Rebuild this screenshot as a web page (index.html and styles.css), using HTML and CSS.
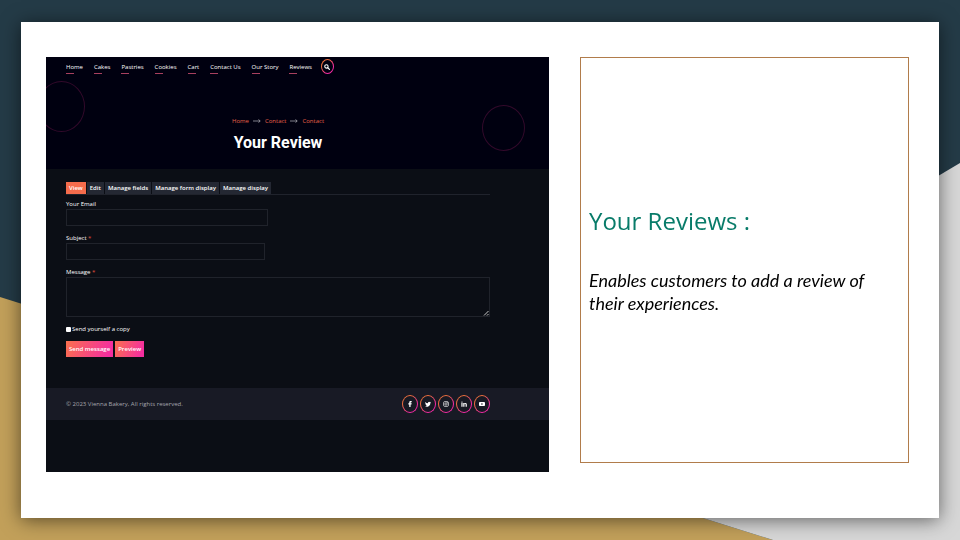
FILE: index.html
```html
<!DOCTYPE html>
<html lang="en">
<head>
<meta charset="utf-8">
<title>Your Reviews</title>
<link rel="stylesheet" href="styles.css">
</head>
<body>
<svg class="backdrop" viewBox="0 0 960 540" preserveAspectRatio="none" aria-hidden="true">
  <rect width="960" height="540" fill="#243b47"/>
  <path d="M0 297L773 540H0Z" fill="#c2a05a"/>
  <path d="M960 163V540H773L480 448Z" fill="#d7d7d7"/>
</svg>
<main class="slide">
  <section class="site">
    <header class="hero">
      <span class="ring ring-left"></span>
      <span class="ring ring-right"></span>
      <nav class="menu">
        <a href="#">Home</a>
        <a href="#">Cakes</a>
        <a href="#">Pastries</a>
        <a href="#">Cookies</a>
        <a href="#">Cart</a>
        <a href="#">Contact Us</a>
        <a href="#">Our Story</a>
        <a href="#">Reviews</a>
        <button class="round search" type="button" aria-label="Search">
          <svg viewBox="0 0 16 16"><circle cx="6.5" cy="6.5" r="4.5" fill="none" stroke="#fff" stroke-width="2.8"/><path d="M10 10l4.5 4.5" stroke="#fff" stroke-width="3.2" stroke-linecap="round"/></svg>
        </button>
      </nav>
      <div class="crumbs">
        <a href="#">Home</a>
        <svg viewBox="0 0 16 8"><path d="M0 4H14M11 1l3.500 3L11 7" fill="none" stroke="#a9a9b2" stroke-width="1.500"/></svg>
        <a href="#">Contact</a>
        <svg viewBox="0 0 16 8"><path d="M0 4H14M11 1l3.500 3L11 7" fill="none" stroke="#a9a9b2" stroke-width="1.500"/></svg>
        <a href="#">Contact</a>
      </div>
      <h2 class="title">Your Review</h2>
    </header>
    <div class="content">
      <nav class="tabs">
        <a class="tab active" href="#">View</a>
        <a class="tab" href="#">Edit</a>
        <a class="tab" href="#">Manage fields</a>
        <a class="tab" href="#">Manage form display</a>
        <a class="tab" href="#">Manage display</a>
      </nav>
      <form class="form">
        <label for="email">Your Email</label>
        <input class="field email" id="email" type="email">
        <label for="subject">Subject <span class="required">*</span></label>
        <input class="field subject" id="subject" type="text">
        <label for="message">Message <span class="required">*</span></label>
        <div class="message-box">
          <textarea class="field message" id="message"></textarea>
          <svg class="grip" viewBox="0 0 6 6" aria-hidden="true"><path d="M1 5.500L5.500 1M4 5.500L5.500 4" stroke="#c8c8c8" stroke-width="1"/></svg>
        </div>
        <div class="copy">
          <input id="copy" type="checkbox">
          <label for="copy">Send yourself a copy</label>
        </div>
        <div class="actions">
          <button type="button">Send message</button>
          <button type="button">Preview</button>
        </div>
      </form>
    </div>
    <footer class="footer">
      <span>© 2023 Vienna Bakery, All rights reserved.</span>
      <div class="social">
        <a class="round" href="#" aria-label="Facebook"><svg viewBox="0 0 16 16"><path fill="#fff" d="M6 16V9H3.500V6H6V4c0-2.700 1.500-4 4-4h2.500v3H11c-1.200 0-1.500.5-1.500 1.500V6h3L12 9H9.500v7z"/></svg></a>
        <a class="round" href="#" aria-label="Twitter"><svg viewBox="0 0 16 16"><path fill="#fff" d="M16 3.500c-.6.300-1.200.4-1.900.5.700-.4 1.200-1 1.400-1.800-.6.400-1.300.6-2.100.8a3.300 3.300 0 0 0-5.600 3C5 5.900 2.700 4.600 1.100 2.600c-.9 1.500-.4 3.400 1 4.400-.5 0-1-.2-1.500-.4 0 1.600 1.100 2.900 2.600 3.200-.5.100-1 .2-1.500.1.400 1.300 1.600 2.200 3.100 2.300A6.600 6.600 0 0 1 0 13.500 9.300 9.300 0 0 0 14.400 5.200c.6-.5 1.200-1 1.600-1.700z"/></svg></a>
        <a class="round" href="#" aria-label="Instagram"><svg viewBox="0 0 16 16" fill="none" stroke="#fff" stroke-width="1.700"><rect x="1.500" y="1.500" width="13" height="13" rx="3.500"/><circle cx="8" cy="8" r="3.200"/><circle cx="12" cy="4" r=".5"/></svg></a>
        <a class="round" href="#" aria-label="LinkedIn"><svg viewBox="0 0 16 16"><path fill="#fff" d="M1 5.500h3.200V15H1zM2.600 1a1.800 1.800 0 1 1 0 3.600 1.800 1.800 0 0 1 0-3.600zM6 5.500h3v1.300c.5-.9 1.600-1.600 3-1.600 3 0 3.500 2 3.500 4.500V15h-3.200v-4.700c0-1.100 0-2.400-1.500-2.400s-1.600 1.100-1.600 2.300V15H6z"/></svg></a>
        <a class="round" href="#" aria-label="YouTube"><svg viewBox="0 0 16 16"><path fill="#fff" fill-rule="evenodd" d="M3 2.500h10c2 0 3 1 3 3v5c0 2-1 3-3 3H3c-2 0-3-1-3-3v-5c0-2 1-3 3-3zM6.500 5.500v5L11 8z"/></svg></a>
      </div>
    </footer>
  </section>
  <aside class="caption">
    <h1>Your Reviews :</h1>
    <p>Enables customers to add a review of their experiences.</p>
  </aside>
</main>
</body>
</html>
```
FILE: styles.css
```css
* {
  box-sizing: border-box;
}

body {
  margin: 0;
  min-height: 100vh;
  padding: 22px 21px;
  display: flex;
}

a {
  color: inherit;
  text-decoration: none;
}

.backdrop {
  position: fixed;
  inset: 0;
  width: 100%;
  height: 100%;
  z-index: -1;
}

.slide {
  flex: 1;
  display: grid;
  grid-template-columns: 503fr 329fr;
  gap: 31px;
  padding: 35px 30px 46px 25px;
  background: #fff;
  box-shadow: 0 2px 18px rgba(0, 0, 0, 0.55);
}

.site {
  background: #0b0e15;
  color: #fff;
  font: 6px/8px "Open Sans", sans-serif;
}

.hero {
  position: relative;
  overflow: hidden;
  background: #000010;
  padding: 2px 20px 15px;
}

.menu {
  display: flex;
  align-items: center;
  gap: 11px;
}

.menu a {
  background: linear-gradient(#a8405f, #a8405f) 0 100% / 8px 1px no-repeat;
  padding: 4px 0 3px;
}

.round {
  display: grid;
  place-items: center;
  width: 16px;
  height: 18px;
  padding: 0;
  border: 1px solid transparent;
  border-radius: 50%;
  background: linear-gradient(#171923, #171923) padding-box, linear-gradient(135deg, #f0703f 30%, #f52ba5 70%) border-box;
}

.round svg {
  width: 6px;
  height: 6px;
}

.search {
  width: 13px;
  height: 15px;
  margin-left: -2px;
  background: linear-gradient(#000010, #000010) padding-box, linear-gradient(135deg, #f0703f 30%, #f52ba5 70%) border-box;
}

.ring {
  position: absolute;
  border: 1px solid #32092b;
  border-radius: 50%;
}

.ring-left {
  left: -8px;
  top: 24px;
  width: 47px;
  height: 51px;
}

.ring-right {
  right: 24px;
  top: 48px;
  width: 43px;
  height: 46px;
}

.crumbs {
  display: flex;
  align-items: center;
  justify-content: center;
  gap: 4px;
  margin-top: 43px;
  padding-right: 39px;
  color: #e8604a;
}

.crumbs svg {
  width: 8px;
  height: 4px;
}

.title {
  margin: 7px 0 0;
  padding-right: 39px;
  text-align: center;
  font: bold 16px/22px Roboto, sans-serif;
  color: #fff;
}

.content {
  padding: 13px 59px 31px 20px;
}

.tabs {
  display: flex;
  gap: 1px;
  border-bottom: 1px solid #20232c;
}

.tab {
  padding: 2px 3px;
  background: #242833;
  font-weight: 600;
}

.tab.active {
  background: #f56c4c;
}

.form {
  display: flex;
  flex-direction: column;
  padding-top: 5px;
}

.form label {
  font-weight: 500;
}

.required {
  color: #e8523f;
}

.field {
  margin: 1px 0 8px;
  padding: 2px;
  border: 1px solid #20232b;
  border-radius: 0;
  background: transparent;
  color: inherit;
  font: inherit;
}

.email {
  width: 202px;
  max-width: 100%;
  height: 17px;
}

.subject {
  width: 199px;
  max-width: 100%;
  height: 17px;
}

.message-box {
  position: relative;
  display: grid;
}

.message {
  height: 40px;
  resize: none;
}

.grip {
  position: absolute;
  right: 1px;
  bottom: 9px;
  width: 6px;
  height: 6px;
}

.copy {
  display: flex;
  align-items: center;
  gap: 1px;
}

.copy input {
  appearance: none;
  width: 5px;
  height: 5px;
  margin: 0;
  background: #fff;
  border-radius: 1px;
}

.actions {
  display: flex;
  gap: 2px;
  margin-top: 8px;
}

.actions button {
  padding: 4px 3px;
  border: 0;
  background: linear-gradient(110deg, #fa704e, #f52e9f 90%);
  color: #fff;
  font: 600 6px/8px "Open Sans", sans-serif;
}

.footer {
  display: flex;
  align-items: center;
  justify-content: space-between;
  padding: 7px 59px 7px 20px;
  background: #181a25;
  color: #a5a6ad;
}

.social {
  display: flex;
  gap: 2px;
}

.caption {
  display: flex;
  flex-direction: column;
  justify-content: center;
  margin-bottom: 9px;
  padding: 0 8px;
  border: 1px solid #b17c4b;
}

.caption h1 {
  margin: 0 0 32px;
  color: #087b69;
  font: 24px/32px "Open Sans", sans-serif;
}

.caption p {
  margin: 0;
  color: #000;
  font: italic 18px/23px Lato, sans-serif;
}
```
